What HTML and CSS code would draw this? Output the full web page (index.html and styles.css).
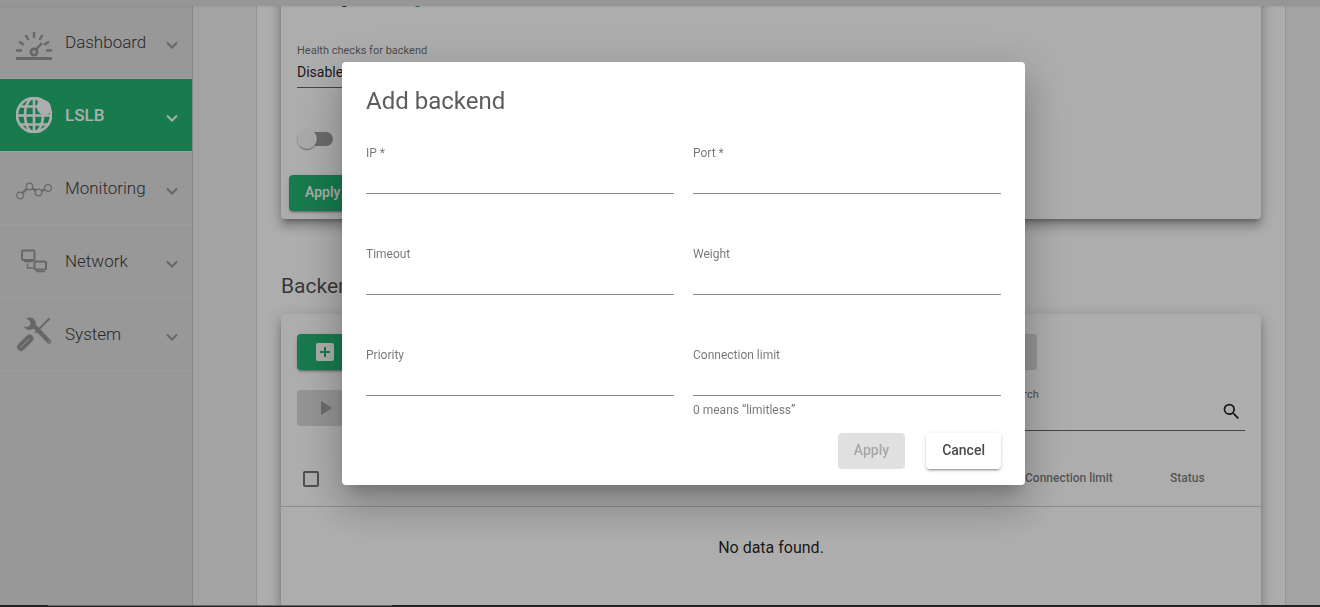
FILE: index.html
```html
<!DOCTYPE html>
<html lang="en">
<head>
<meta charset="utf-8">
<title>Add backend</title>
<link rel="stylesheet" href="styles.css">
</head>
<body>
<div class="app">
  <header class="topbar"></header>
  <div class="shell">
    <nav class="sidebar">
      <a class="nav-item" href="#dashboard">
        <svg class="nav-icon" viewBox="0 0 36 36" fill="none" stroke="currentColor" stroke-width="2.4">
          <path d="M0 34.500h36" stroke-width="3"/>
          <circle cx="18" cy="28" r="3.100" stroke-width="2.800"/>
          <path d="M20 25.500l6-6.500M0 26.500h6M30 26.500h6M3 17.700l5 3M9.500 11l3 5M18 8v6M26.500 11l-3 5M33 17.700l-5 3"/>
        </svg>
        <span class="nav-label">Dashboard</span>
        <svg class="chevron" viewBox="0 0 12 12"><path d="M1 3.500l5 5 5-5"/></svg>
      </a>
      <a class="nav-item active" href="#lslb">
        <svg class="nav-icon" viewBox="0 0 36 36" fill="none" stroke="currentColor" stroke-width="2.600">
          <circle cx="18" cy="18" r="17"/>
          <path d="M18 1v34M1 18.500h34M4 9.500h28M4 27.500h28"/>
          <ellipse cx="18" cy="18" rx="9" ry="17"/>
          <path d="M22 5c4-4 12-2 13 5 1 5-3 8-7 8-6-1-9-7-6-13z" fill="currentColor" stroke="none"/>
        </svg>
        <span class="nav-label">LSLB</span>
        <svg class="chevron" viewBox="0 0 12 12"><path d="M1 3.500l5 5 5-5"/></svg>
      </a>
      <a class="nav-item" href="#monitoring">
        <svg class="nav-icon" viewBox="0 0 36 36" fill="none" stroke="currentColor" stroke-width="1.200">
          <circle cx="4" cy="25.500" r="3.300"/><circle cx="13.500" cy="16.500" r="3.300"/><circle cx="22.500" cy="22.500" r="3.300"/><circle cx="32" cy="18" r="3.300"/>
          <path d="M6.500 23l4.500-4.500M16.500 18.500l3.500 2.300M25.500 21l3.500-1.700" stroke-width="2.400"/>
        </svg>
        <span class="nav-label">Monitoring</span>
        <svg class="chevron" viewBox="0 0 12 12"><path d="M1 3.500l5 5 5-5"/></svg>
      </a>
      <a class="nav-item" href="#network">
        <svg class="nav-icon" viewBox="0 0 36 36" fill="none" stroke="currentColor" stroke-width="2">
          <rect x="6" y="7.500" width="12.500" height="9.500" rx="1"/>
          <rect x="18.500" y="18.500" width="11.500" height="8" rx="1"/>
          <path d="M8 18.500h9M20 28.500h9M11.500 20.500v4.500h5.500" stroke-width="1.500"/>
        </svg>
        <span class="nav-label">Network</span>
        <svg class="chevron" viewBox="0 0 12 12"><path d="M1 3.500l5 5 5-5"/></svg>
      </a>
      <a class="nav-item" href="#system">
        <svg class="nav-icon" viewBox="0 0 36 36" fill="none" stroke="currentColor" stroke-linecap="round">
          <path d="M17 9l16 16.500" stroke-width="4.500"/>
          <path d="M10 2.500c4-2 8-.5 9.500 3 1 3-.5 7-4 8-3 1-6 0-7.500-3l4 .5 2.500-2.500-.5-3.500z" fill="currentColor" stroke="none"/>
          <path d="M33 3L20 16" stroke-width="2.200"/>
          <path d="M5 31l8.500-8.500" stroke-width="8"/>
          <path d="M5 31l8-8" stroke="#e1e1e1" stroke-width="0.800"/>
          <circle cx="33" cy="25.500" r=".8" fill="#e1e1e1" stroke="none"/>
        </svg>
        <span class="nav-label">System</span>
        <svg class="chevron" viewBox="0 0 12 12"><path d="M1 3.500l5 5 5-5"/></svg>
      </a>
    </nav>
    <main class="content">
      <div class="page">
        <section class="card settings">
          <div class="settings-body">
            <p class="notice"><span>Warning</span><a href="#config">Config</a></p>
            <label class="small-label" for="health">Health checks for backend</label>
            <select class="select" id="health"><option>Disabled</option></select>
            <label class="toggle"><input type="checkbox" aria-label="Farm guardian logs"></label>
          </div>
          <button class="btn green" type="button">Apply</button>
        </section>
        <h2 class="heading">Backends</h2>
        <section class="card backends">
          <div class="tools">
            <button class="btn green create" type="button" aria-label="Create backend">
              <svg class="icon" viewBox="0 0 24 24"><path d="M19 3H5a2 2 0 0 0-2 2v14a2 2 0 0 0 2 2h14a2 2 0 0 0 2-2V5a2 2 0 0 0-2-2zm-2 10h-4v4h-2v-4H7v-2h4V7h2v4h4z"/></svg>
            </button>
            <button class="btn off wide" type="button" disabled aria-label="Delete"></button>
          </div>
          <div class="tools second">
            <button class="btn off start" type="button" disabled aria-label="Start">
              <svg class="icon" viewBox="0 0 24 24"><path d="M8 5v14l11-7z"/></svg>
            </button>
            <div class="search">
              <label class="small-label" for="search">Search</label>
              <div class="search-line">
                <input id="search" type="text">
                <svg class="icon" viewBox="0 0 24 24"><path d="M15.500 14h-.79l-.28-.27A6.471 6.471 0 0 0 16 9.500 6.500 6.500 0 1 0 9.500 16c1.610 0 3.090-.59 4.230-1.570l.27.28v.79l5 4.990L20.490 19zm-6 0a4.500 4.500 0 1 1 0-9 4.500 4.500 0 0 1 0 9z"/></svg>
              </div>
            </div>
          </div>
          <table class="table">
            <thead>
              <tr><th class="check"><input type="checkbox" aria-label="Select all"></th><th>IP</th><th class="limit">Connection limit</th><th class="status">Status</th></tr>
            </thead>
            <tbody><tr><td colspan="4">No data found.</td></tr></tbody>
          </table>
        </section>
      </div>
    </main>
  </div>
  <div class="bottom"><span></span></div>
</div>

<div class="backdrop">
  <form class="dialog" role="dialog" aria-labelledby="dialog-title">
    <h1 class="dialog-title" id="dialog-title">Add backend</h1>
    <div class="fields">
      <div class="field"><label for="ip">IP *</label><input id="ip" type="text"></div>
      <div class="field"><label for="port">Port *</label><input id="port" type="text"></div>
      <div class="field"><label for="timeout">Timeout</label><input id="timeout" type="text"></div>
      <div class="field"><label for="weight">Weight</label><input id="weight" type="text"></div>
      <div class="field"><label for="priority">Priority</label><input id="priority" type="text"></div>
      <div class="field"><label for="limit">Connection limit</label><input id="limit" type="text"><span class="hint">0 means “limitless”</span></div>
    </div>
    <div class="actions">
      <button class="btn dialog-off" type="submit" disabled>Apply</button>
      <button class="btn plain" type="button">Cancel</button>
    </div>
  </form>
</div>
</body>
</html>
```

FILE: styles.css
```css
* { box-sizing: border-box; }
body {
  margin: 0;
  font-family: Roboto, "Liberation Sans", sans-serif;
  font-size: 14px;
  line-height: 20px;
  color: rgba(0, 0, 0, 0.87);
}
button, input, select { font: inherit; color: inherit; }
.app { display: flex; flex-direction: column; height: 100vh; background: #f1f1f1; }
.topbar { flex: none; height: 6px; background: #dedede; box-shadow: 0 0 3px rgba(0, 0, 0, 0.15); z-index: 1; }
.shell { display: flex; flex: 1; min-height: 0; }
.bottom { flex: none; height: 2px; padding-left: 48px; background: #333; }
.bottom span { display: block; width: 344px; height: 1px; background: #999; }

.sidebar { flex: none; width: 193px; background: #e1e1e1; border-right: 1px solid #c6c6c6; }
.nav-item {
  display: flex;
  align-items: center;
  height: 73px;
  padding: 0 14px 0 16px;
  border-bottom: 1px solid #e8e8e8;
  color: #999;
  text-decoration: none;
}
.nav-icon { width: 36px; height: 36px; }
.nav-label { flex: 1; margin-left: 13px; font-size: 17px; font-weight: 300; color: #3c3c3c; }
.chevron { width: 12px; height: 12px; margin-top: 6px; fill: none; stroke: currentColor; stroke-width: 2; }
.active { background: #22b573; color: #fff; }
.active .nav-label { color: #fff; font-weight: 500; }

.content { flex: 1; min-width: 0; overflow: hidden; padding: 0 34px 0 64px; }
.page {
  display: flow-root;
  min-height: 100%;
  padding: 0 24px 24px;
  background: #fff;
  border-right: 1px solid #dadada;
  box-shadow: -1px 0 #dadada;
}
.card {
  border-radius: 4px;
  background: #fff;
  box-shadow: 0 5px 5px -3px rgba(0, 0, 0, 0.3), 0 8px 10px 1px rgba(0, 0, 0, 0.14), 0 3px 14px 2px rgba(0, 0, 0, 0.14);
}
.settings { margin-top: -33px; padding: 16px 8px 8px; }
.settings-body { display: flex; flex-direction: column; padding: 0 8px; }
.notice { display: flex; gap: 32px; margin: 0 0 33px; font-weight: 500; }
.notice a { color: #22b573; text-decoration: none; }
.small-label { display: block; font-size: 11px; line-height: 18px; color: rgba(0, 0, 0, 0.6); }
.select {
  width: 240px;
  height: 28px;
  padding: 0 0 4px;
  border: 0;
  border-bottom: 1px solid rgba(0, 0, 0, 0.6);
  border-radius: 0;
  background: none;
  appearance: none;
}
.toggle { display: flex; align-items: center; height: 24px; margin: 39px 0 24px; }
.toggle input {
  appearance: none;
  position: relative;
  width: 36px;
  height: 14px;
  margin: 0;
  border-radius: 8px;
  background: #9e9e9e;
}
.toggle input::before {
  content: "";
  position: absolute;
  top: -3px;
  left: 0;
  width: 20px;
  height: 20px;
  border-radius: 50%;
  background: #fafafa;
  box-shadow: 0 2px 1px -1px rgba(0, 0, 0, 0.2), 0 1px 1px rgba(0, 0, 0, 0.14), 0 1px 3px rgba(0, 0, 0, 0.12);
}
.btn {
  display: inline-flex;
  align-items: center;
  justify-content: center;
  height: 36px;
  padding: 0 16px 2px;
  border: 0;
  border-radius: 4px;
  font-weight: 500;
}
.icon { width: 24px; height: 24px; fill: currentColor; }
.green {
  background: #22b573;
  color: #fff;
  box-shadow: 0 3px 1px -2px rgba(0, 0, 0, 0.2), 0 2px 2px rgba(0, 0, 0, 0.14), 0 1px 5px rgba(0, 0, 0, 0.12);
}
.off { background: #dbdbdb; color: #a0a0a0; }
.heading { margin: 53px 0 14px; font-size: 21px; line-height: 28px; font-weight: 400; color: rgba(0, 0, 0, 0.7); }
.backends { padding-top: 20px; }
.tools { display: flex; gap: 8px; padding: 0 16px; }
.tools .btn { padding-bottom: 0; }
.create { width: 140px; justify-content: flex-start; }
.wide { width: 592px; }
.second { align-items: flex-end; justify-content: space-between; margin-top: 16px; }
.start { width: 120px; justify-content: flex-start; margin-bottom: 5px; }
.search { width: 240px; }
.search-line { display: flex; align-items: center; height: 27px; border-bottom: 1px solid rgba(0, 0, 0, 0.6); }
.search-line input { flex: 1; min-width: 0; border: 0; background: none; outline: 0; }
.search-line .icon { width: 21px; height: 21px; margin: 0 3px 12px 0; }

.table { width: 100%; margin-top: 19px; border-collapse: collapse; }
.table th {
  height: 56px;
  padding: 0;
  border-bottom: 1px solid #cfcfcf;
  text-align: left;
  font-size: 12px;
  font-weight: 500;
  color: rgba(0, 0, 0, 0.54);
}
.table .check { width: 72px; padding: 2px 0 0 22px; }
.limit { width: 145px; }
.status { width: 91px; }
.check input {
  display: block;
  appearance: none;
  width: 16px;
  height: 16px;
  margin: 0;
  border: 2px solid rgba(0, 0, 0, 0.54);
  border-radius: 2px;
}
.table td { height: 140px; padding: 31px 0 0; text-align: center; vertical-align: top; font-size: 16px; }

.backdrop {
  position: fixed;
  inset: 0;
  z-index: 10;
  display: flex;
  align-items: flex-start;
  justify-content: center;
  padding: 62px 0 0 47px;
  background: rgba(0, 0, 0, 0.32);
}
.dialog {
  width: 100%;
  max-width: 683px;
  padding: 25px 24px 16px;
  border-radius: 4px;
  background: #fff;
  box-shadow: 0 11px 15px -7px rgba(0, 0, 0, 0.2), 0 24px 38px 3px rgba(0, 0, 0, 0.14), 0 9px 46px 8px rgba(0, 0, 0, 0.12);
}
.dialog-title { margin: 0 0 30px; font-size: 24px; line-height: 28px; font-weight: 400; color: #5c5c5c; }
.fields { display: grid; grid-template-columns: 1fr 1fr; gap: 52px 19px; }
.field { display: flex; flex-direction: column; font-size: 12px; line-height: 16px; color: rgba(0, 0, 0, 0.54); }
.field input {
  width: 100%;
  height: 33px;
  padding: 0;
  border: 0;
  border-bottom: 1px solid #8c8c8c;
  border-radius: 0;
  outline: 0;
  font-size: 14px;
}
.hint { margin-top: 6px; }
.actions { display: flex; justify-content: flex-end; gap: 21px; margin-top: 15px; }
.dialog-off { background: #e0e0e0; color: #a6a6a6; }
.plain {
  background: #fff;
  color: #4a4a4a;
  box-shadow: 0 3px 1px -2px rgba(0, 0, 0, 0.2), 0 2px 2px rgba(0, 0, 0, 0.14), 0 1px 5px rgba(0, 0, 0, 0.12);
}
```
